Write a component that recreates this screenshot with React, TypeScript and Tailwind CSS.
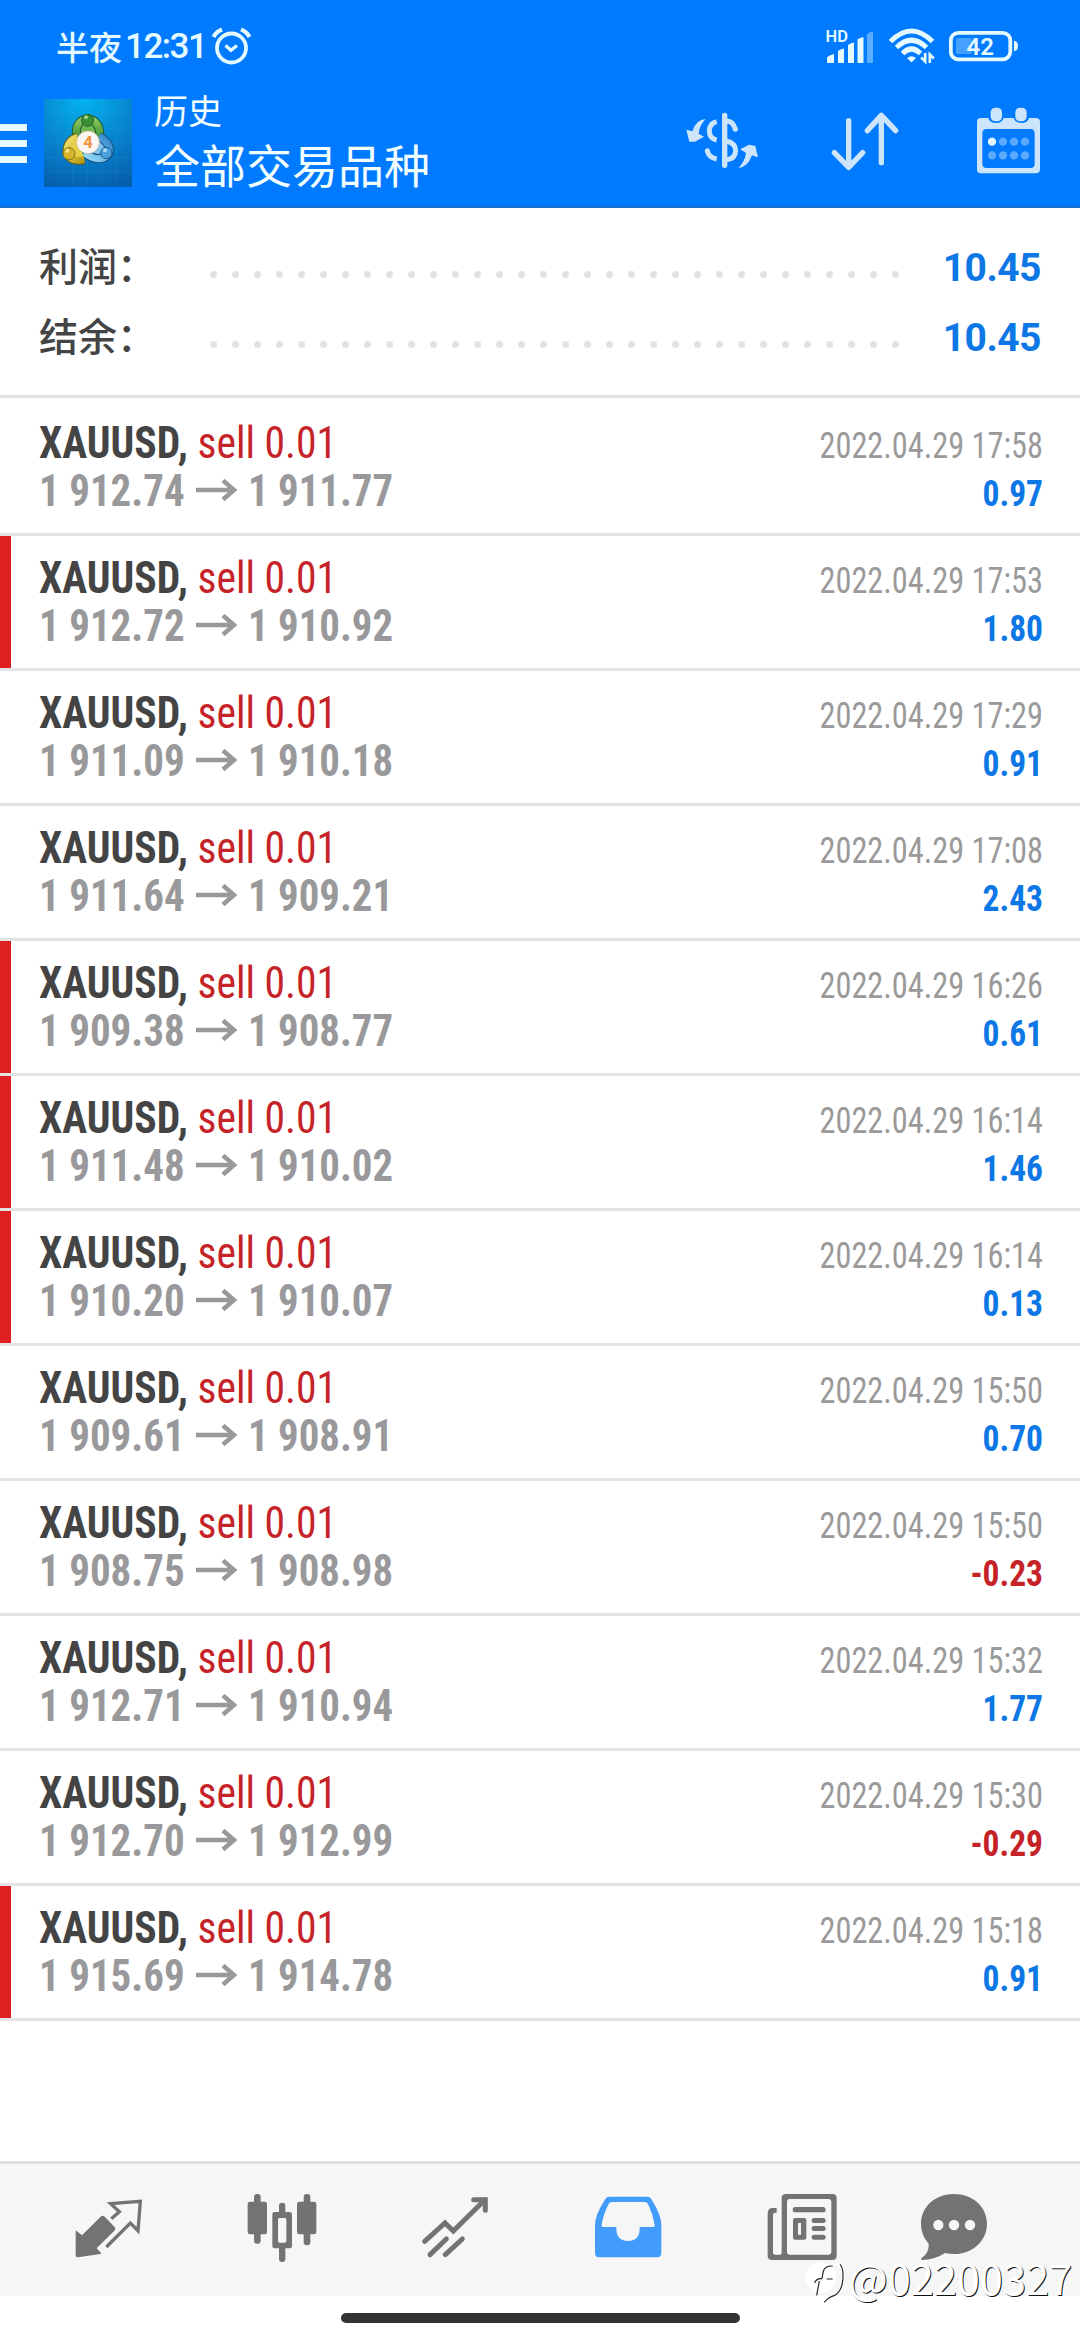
import clsx from 'clsx';

interface Deal {
    open: string;
    close: string;
    time: string;
    profit: string;
    marked?: boolean;
}

const deals: Deal[] = [
    { open: '1 912.74', close: '1 911.77', time: '2022.04.29 17:58', profit: '0.97' },
    { open: '1 912.72', close: '1 910.92', time: '2022.04.29 17:53', profit: '1.80', marked: true },
    { open: '1 911.09', close: '1 910.18', time: '2022.04.29 17:29', profit: '0.91' },
    { open: '1 911.64', close: '1 909.21', time: '2022.04.29 17:08', profit: '2.43' },
    { open: '1 909.38', close: '1 908.77', time: '2022.04.29 16:26', profit: '0.61', marked: true },
    { open: '1 911.48', close: '1 910.02', time: '2022.04.29 16:14', profit: '1.46', marked: true },
    { open: '1 910.20', close: '1 910.07', time: '2022.04.29 16:14', profit: '0.13', marked: true },
    { open: '1 909.61', close: '1 908.91', time: '2022.04.29 15:50', profit: '0.70' },
    { open: '1 908.75', close: '1 908.98', time: '2022.04.29 15:50', profit: '-0.23' },
    { open: '1 912.71', close: '1 910.94', time: '2022.04.29 15:32', profit: '1.77' },
    { open: '1 912.70', close: '1 912.99', time: '2022.04.29 15:30', profit: '-0.29' },
    { open: '1 915.69', close: '1 914.78', time: '2022.04.29 15:18', profit: '0.91', marked: true },
];

const summary = [
    { label: '利润：', value: '10.45' },
    { label: '结余：', value: '10.45' },
];

function StatusBar() {
    return (
        <div className="flex h-[92px] items-center pl-[56px] pr-[61px] text-[#e4faff]">
            <span className="text-[33px] leading-none font-medium">半夜</span>
            <span className="ml-[3px] font-['Roboto',sans-serif] text-[35px] leading-none font-medium tracking-[-1.500px]">12:31</span>
            <svg className="ml-[5px] h-[38px] w-[42px]" viewBox="0 0 42 38" fill="none" stroke="currentColor">
                <circle cx="20.500" cy="21" r="14.500" strokeWidth="3.800" />
                <path d="M14.500 18.500l5.500 4.800 6-4.800" strokeWidth="3.200" />
                <path d="M2.500 10Q5.500 4.500 11 2.500M30 2.500Q35.500 4.500 38.500 10" strokeWidth="4.200" />
            </svg>

            <div className="ml-auto flex items-center">
                <svg className="h-[46px] w-[60px]" viewBox="-4 -6 60 46" fill="currentColor">
                    <text x="0.500" y="13" fontSize="16.500" fontWeight="600" fontFamily="Roboto, sans-serif">HD</text>
                    <path d="M2 34v-5q0-2 7-4v9zM13 34V22q2-2 6-2.500V34zM23 34V16q2-2 6-2.500V34zM32.500 34V10.500q2-2 6-2.500v26z" />
                    <path d="M42 34V5.500Q44 3 48 2.500V34z" opacity="0.400" />
                </svg>
                <svg className="ml-[7px] h-[36px] w-[48px]" viewBox="0 0 48 36" fill="none" stroke="currentColor" strokeWidth="5">
                    <path d="M2.500 13.500Q23.500-7.500 44.500 13.500M8.500 19.500Q23.500 5 38.500 19.500M14.500 25.500Q23.500 16.500 32.500 25.500" />
                    <path d="M19 30Q23.500 26.500 28 30l-4.500 4.500z" fill="currentColor" stroke="none" />
                    <path d="M37.200 25v8.500l-4-4M41.800 35v-8.500l4 4" strokeWidth="2.600" />
                </svg>
                <svg className="ml-[13px] h-[32px] w-[70px]" viewBox="0 0 70 32" fill="currentColor">
                    <rect x="1.800" y="2.800" width="59.500" height="26.500" rx="7.500" fill="none" stroke="currentColor" strokeWidth="3.800" />
                    <path d="M65 11q4 0 4 5t-4 5z" />
                    <rect x="7" y="8" width="16" height="16" rx="2" opacity="0.300" />
                    <text x="17.500" y="24.500" fontSize="24" fontWeight="600" fontFamily="Roboto, sans-serif">42</text>
                </svg>
            </div>
        </div>
    );
}

function AppLogo() {
    return (
        <svg className="ml-[17px] h-[88px] w-[88px]" viewBox="133 236 264 264">
            <defs>
                <radialGradient id="sky" cx="0.45" cy="0" r="1.05">
                    <stop offset="0" stopColor="#02b4ef" />
                    <stop offset="0.55" stopColor="#0783cd" />
                    <stop offset="1" stopColor="#065fae" />
                </radialGradient>
                <linearGradient id="leaf" x1="0" y1="0" x2="0" y2="1">
                    <stop offset="0" stopColor="#8fc65e" />
                    <stop offset="1" stopColor="#2f8a2c" />
                </linearGradient>
                <linearGradient id="gold" x1="0" y1="0" x2="1" y2="1">
                    <stop offset="0" stopColor="#f4e36a" />
                    <stop offset="1" stopColor="#b89a12" />
                </linearGradient>
                <linearGradient id="aqua" x1="1" y1="0" x2="0" y2="1">
                    <stop offset="0" stopColor="#2d86cb" />
                    <stop offset="1" stopColor="#9ddcf6" />
                </linearGradient>
            </defs>
            <rect x="133" y="236" width="264" height="264" fill="url(#sky)" />
            <path
                d="M175 236v264M219 236v264M263 236v264M307 236v264M351 236v264M133 280h264M133 324h264M133 368h264M133 412h264M133 456h264"
                stroke="#3aa5df"
                strokeWidth="2"
                opacity="0.25"
            />
            {/* three linked figures around the version badge */}
            <path d="M232 352Q222 302 264 295Q306 302 300 362" fill="#6fb84e" stroke="#1b5a33" strokeWidth="27" />
            <path d="M232 352Q222 302 264 295Q306 302 300 362" fill="none" stroke="url(#leaf)" strokeWidth="21" />
            <path d="M298 348Q338 370 326 402Q300 430 254 398" fill="#7fc4ea" stroke="#14507f" strokeWidth="27" />
            <path d="M298 348Q338 370 326 402Q300 430 254 398" fill="none" stroke="url(#aqua)" strokeWidth="21" />
            <path d="M234 350Q200 362 202 400Q216 426 254 418" fill="none" stroke="#665d12" strokeWidth="27" />
            <path d="M234 350Q200 362 202 400Q216 426 254 418" fill="#e6d04a" stroke="url(#gold)" strokeWidth="21" />
            <circle cx="264" cy="300" r="18" fill="#3a8f35" stroke="#1f6430" strokeWidth="3" />
            <circle cx="208" cy="400" r="18" fill="#d7b32c" stroke="#84721b" strokeWidth="3" />
            <circle cx="320" cy="398" r="17" fill="#4a9fdc" stroke="#1c5c93" strokeWidth="3" />
            <circle cx="259" cy="291" r="6" fill="#9fd07f" />
            <circle cx="203" cy="391" r="6" fill="#f6e48a" />
            <circle cx="316" cy="390" r="6" fill="#a9dbf8" />
            <circle cx="265" cy="366" r="34" fill="#fbf6f2" stroke="#c9b9a3" strokeWidth="2" />
            <text x="265" y="384" fontSize="50" fontWeight="700" textAnchor="middle" fill="#f0913f" fontFamily="Roboto, sans-serif">4</text>
        </svg>
    );
}

function Toolbar() {
    return (
        <div className="flex h-[116px] items-start">
            <div className="flex flex-col gap-[9px] pt-[32px]">
                <div className="h-[7px] w-[27px] bg-[#e4faff]" />
                <div className="h-[7px] w-[27px] bg-[#e4faff]" />
                <div className="h-[7px] w-[27px] bg-[#e4faff]" />
            </div>
            <div className="pt-[7px]">
                <AppLogo />
            </div>
            <div className="ml-[22px] flex flex-col text-[#f2feff]">
                <span className="text-[34px] leading-[36px]">历史</span>
                <span className="mt-[10px] text-[46px] leading-[50px]">全部交易品种</span>
            </div>

            <div className="ml-auto flex items-start pt-[7px] pr-[38px] text-[#cde5fb]">
                <svg className="mt-[11px] h-[60px] w-[75px]" viewBox="45 60 225 180" fill="none" stroke="currentColor">
                    <path d="M164 76v150" strokeWidth="16" strokeLinecap="round" />
                    <path d="M140 95Q118 100 118 124Q119 145 140 150M112 182Q116 202 140 207" strokeWidth="15" />
                    <circle cx="112" cy="182" r="7.500" fill="currentColor" stroke="none" />
                    <path d="M170 93Q190 94 196 118M170 153Q197 160 197 182Q196 207 170 209" strokeWidth="15" />
                    <circle cx="196" cy="118" r="7.500" fill="currentColor" stroke="none" />
                    <path d="M107 87Q78 88 67 124L49 119L58 155L75 155L102 140L86 131Q88 106 107 87z" fill="currentColor" stroke="none" />
                    <path d="M205 234Q233 232 246 196L264 202L256 168L237 164L211 178L228 189Q225 214 205 234z" fill="currentColor" stroke="none" />
                </svg>
                <svg
                    className="ml-[70px] mt-[11px] h-[62px] w-[70px]"
                    viewBox="480 60 210 186"
                    fill="none"
                    stroke="currentColor"
                    strokeWidth="16"
                    strokeLinecap="round"
                    strokeLinejoin="round"
                >
                    <path d="M536 92v140M493 188l43 44 42-44M634 218V76M592 122l42-46 43 46" />
                </svg>
                <svg className="ml-[75px] mt-[7px] h-[69px] w-[67px]" viewBox="915 48 201 207" fill="currentColor">
                    <path
                        fillRule="evenodd"
                        d="M933 84h22q4 15 23 15t23-15h30q4 15 23 15t23-15h21q12 0 12 12v142q0 12-12 12H933q-12 0-12-12V96q0-12 12-12zM950 117q-13 0-13 13v91q0 13 13 13h131q13 0 13-13v-91q0-13-13-13z"
                    />
                    <rect x="962" y="53" width="34" height="41" rx="14" />
                    <rect x="1036" y="53" width="34" height="41" rx="14" />
                    <circle cx="966" cy="155" r="12.500" fill="#dff6ff" />
                    <g opacity="0.450">
                        <circle cx="999" cy="155" r="12.500" />
                        <circle cx="1032" cy="155" r="12.500" />
                        <circle cx="1065" cy="155" r="12.500" />
                        <circle cx="966" cy="196" r="12.500" />
                        <circle cx="999" cy="196" r="12.500" />
                        <circle cx="1032" cy="196" r="12.500" />
                        <circle cx="1065" cy="196" r="12.500" />
                    </g>
                </svg>
            </div>
        </div>
    );
}

function SummaryRow({ label, value }: { label: string; value: string }) {
    return (
        <div className="flex h-[70px] items-center">
            <span className="w-[171px] pb-[4px] text-[39px] leading-none font-medium text-[#444444]">{label}</span>
            <div className="flex gap-[15px] pt-[16px]">
                {Array.from({ length: 32 }).map((_, idx) => (
                    <div key={idx} className="h-[7px] w-[7px] rounded-full bg-[#e2e2e2]" />
                ))}
            </div>
            <span className="ml-auto pt-[4px] font-['Roboto',sans-serif] text-[39px] leading-none font-bold tracking-[-0.500px] text-[#0d77e6]">
                {value}
            </span>
        </div>
    );
}

function DealRow({ deal }: { deal: Deal }) {
    return (
        <div className="flex h-[135px] border-b-[3px] border-[#e3e3e4] font-['Roboto_Condensed',sans-serif] whitespace-nowrap">
            <div className={clsx('w-[11px]', deal.marked && 'bg-[#e02020]')} />
            <div className="flex flex-1 justify-between pl-[28px] pr-[37px]">
                <div className="flex flex-col pt-[18px]">
                    <div className="origin-left scale-x-[0.945] text-[44px] leading-[48px]">
                        <span className="font-bold text-[#444444]">XAUUSD, </span>
                        <span className="text-[#c62329]">sell 0.01</span>
                    </div>
                    <div className="flex items-center text-[44px] leading-[48px] font-bold text-[#99999b]">
                        <span className="w-[156px] origin-left scale-x-[0.932]">{deal.open}</span>
                        <svg className="h-[24px] w-[44px]" viewBox="0 0 44 24" fill="none" stroke="currentColor" strokeWidth="4.500">
                            <path d="M1 11h38M28 1.500L39 11 28 20.500" />
                        </svg>
                        <span className="ml-[9px] origin-left scale-x-[0.928]">{deal.close}</span>
                    </div>
                </div>
                <div className="flex flex-col items-end pt-[21px]">
                    <span className="origin-right scale-x-[0.873] text-[37px] leading-[48px] text-[#9a9a9a]">{deal.time}</span>
                    <span
                        className={clsx(
                            'origin-right scale-x-[0.930] text-[36px] leading-[48px] font-bold',
                            deal.profit.startsWith('-') ? 'text-[#c62329]' : 'text-[#0d77e6]'
                        )}
                    >
                        {deal.profit}
                    </span>
                </div>
            </div>
        </div>
    );
}

function TabBar() {
    return (
        <div className="flex h-[135px] border-t-[3px] border-[#dfdfdf] bg-[#f6f6f6] pt-[28px] pl-[22px] text-[#737373]">
            <div className="flex w-[173px] justify-center">
                <svg className="h-[72px] w-[72px]" viewBox="218 126 216 216" fill="currentColor">
                    <path d="M226 241L245 256L300 201Q307 194 314 201L342 230Q348 236 342 242L289 295L304 311L234 322Q226 322 226 314z" />
                    <path
                        d="M333 206L357 185L331 161L420 154L413 242L390 219L318 291"
                        fill="none"
                        stroke="currentColor"
                        strokeWidth="10"
                    />
                </svg>
            </div>
            <div className="flex w-[173px] justify-center">
                <svg className="h-[72px] w-[72px]" viewBox="735 126 216 216" fill="currentColor">
                    <rect x="740" y="155" width="58" height="98" rx="7" />
                    <rect x="759" y="132" width="20" height="149" rx="9" />
                    <rect x="888" y="155" width="58" height="98" rx="7" />
                    <rect x="908" y="132" width="20" height="154" rx="9" />
                    <rect x="834" y="158" width="19" height="40" rx="9" />
                    <rect x="834" y="280" width="19" height="56" rx="9" />
                    <path
                        fillRule="evenodd"
                        d="M821 186h45q7 0 7 7v95q0 7-7 7h-45q-7 0-7-7v-95q0-7 7-7zM836 204q-5 0-5 5v64q0 5 5 5h15q5 0 5-5v-64q0-5-5-5z"
                    />
                </svg>
            </div>
            <div className="flex w-[173px] justify-center">
                <svg className="h-[72px] w-[72px]" viewBox="114 126 216 216" fill="none" stroke="currentColor" strokeWidth="15">
                    <path d="M131 274L192 219L217 243L311 150" strokeLinecap="round" />
                    <path d="M278 149h35v32" strokeLinecap="round" />
                    <path d="M147 314L196 267M193 314L244 267" strokeLinecap="round" />
                </svg>
            </div>
            <div className="flex w-[174px] justify-center">
                <svg className="h-[72px] w-[72px] text-[#429cfb]" viewBox="634 126 216 216" fill="currentColor">
                    <path
                        fillRule="evenodd"
                        d="M686 140H800Q808 140 812 147Q842 195 842 225V308Q842 322 828 322H657Q643 322 643 308V225Q643 195 674 147Q678 140 686 140zM694 156Q687 156 684 162Q668 192 663 224Q662 231 669 231H707V240Q710 273 742 273Q774 273 777 240V231H817Q823 231 822 224Q817 192 802 162Q799 156 792 156z"
                    />
                </svg>
            </div>
            <div className="flex w-[173px] justify-center">
                <svg className="h-[72px] w-[72px]" viewBox="135 126 216 216" fill="currentColor">
                    <path
                        fillRule="evenodd"
                        d="M194 132H335Q347 132 347 144V317Q347 330 334 330H153Q140 330 140 317V190Q140 174 156 174H167V188H162Q156 188 156 194V308Q156 314 162 314H176Q182 314 182 308V144Q182 132 194 132zM207 147Q198 147 198 156V305Q198 314 207 314H322Q331 314 331 305V156Q331 147 322 147z"
                    />
                    <rect x="215" y="171" width="99" height="16" rx="8" />
                    <rect x="272" y="204" width="42" height="15" rx="7.500" />
                    <rect x="272" y="228" width="42" height="15" rx="7.500" />
                    <rect x="272" y="254" width="42" height="15" rx="7.500" />
                    <path fillRule="evenodd" d="M222 204h28q6 0 6 6v53q0 6-6 6h-28q-6 0-6-6v-53q0-6 6-6zM231 219v35h9v-35z" />
                </svg>
            </div>
            <div className="flex w-[131px] justify-center">
                <svg className="h-[72px] w-[72px]" viewBox="591 126 216 216" fill="currentColor">
                    <path d="M699 132C755 132 798 170 798 222C798 280 740 325 672 309Q640 330 603 330Q598 328 603 323Q625 308 623 281Q600 256 600 222C600 170 643 132 699 132z" />
                    <circle cx="652" cy="225" r="15.500" fill="#f6f6f6" />
                    <circle cx="699" cy="225" r="15.500" fill="#f6f6f6" />
                    <circle cx="747" cy="225" r="15.500" fill="#f6f6f6" />
                </svg>
            </div>
        </div>
    );
}

function Watermark() {
    return (
        <div className="absolute right-[8px] bottom-[36px] flex items-start gap-[3px]">
            <svg className="h-[44px] w-[40px]" viewBox="257 337 120 132" fill="none">
                <circle cx="304" cy="390" r="46" fill="#ffffff" />
                <path d="M330 356Q362 340 371 372Q376 425 346 444Q328 448 314 464" stroke="#ffffff" strokeWidth="8" />
                <path
                    d="M340 355Q318 354 312 370L308 393M340 394H322M308 393Q290 392 286 406M300 400L292 443M362 350Q374 362 370 400Q366 434 344 444Q328 448 315 464"
                    stroke="#222222"
                    strokeWidth="3.500"
                />
            </svg>
            <span className="-mt-[6px] text-[41.500px] leading-[46px] text-white [text-shadow:1px_1px_0_#111]">@02200327</span>
        </div>
    );
}

export default function App() {
    return (
        <div className="relative flex h-[2340px] w-[1080px] flex-col overflow-hidden bg-white font-['Noto_Sans_CJK_SC',sans-serif]">
            <header className="h-[208px] border-b-2 border-[#1a6fd0] bg-[#007aff]">
                <StatusBar />
                <Toolbar />
            </header>

            <section className="h-[190px] border-b-[3px] border-[#e3e3e4] pt-[23px] pl-[39px] pr-[39px]">
                {summary.map(row => (
                    <SummaryRow key={row.label} {...row} />
                ))}
            </section>

            <main className="flex-1 pt-[3px]">
                {deals.map((deal, idx) => (
                    <DealRow key={idx} deal={deal} />
                ))}
            </main>

            <TabBar />
            <div className="flex h-[44px] justify-center pt-[17px]">
                <div className="h-[10px] w-[399px] rounded-full bg-[#333333]" />
            </div>

            <Watermark />
        </div>
    );
}
